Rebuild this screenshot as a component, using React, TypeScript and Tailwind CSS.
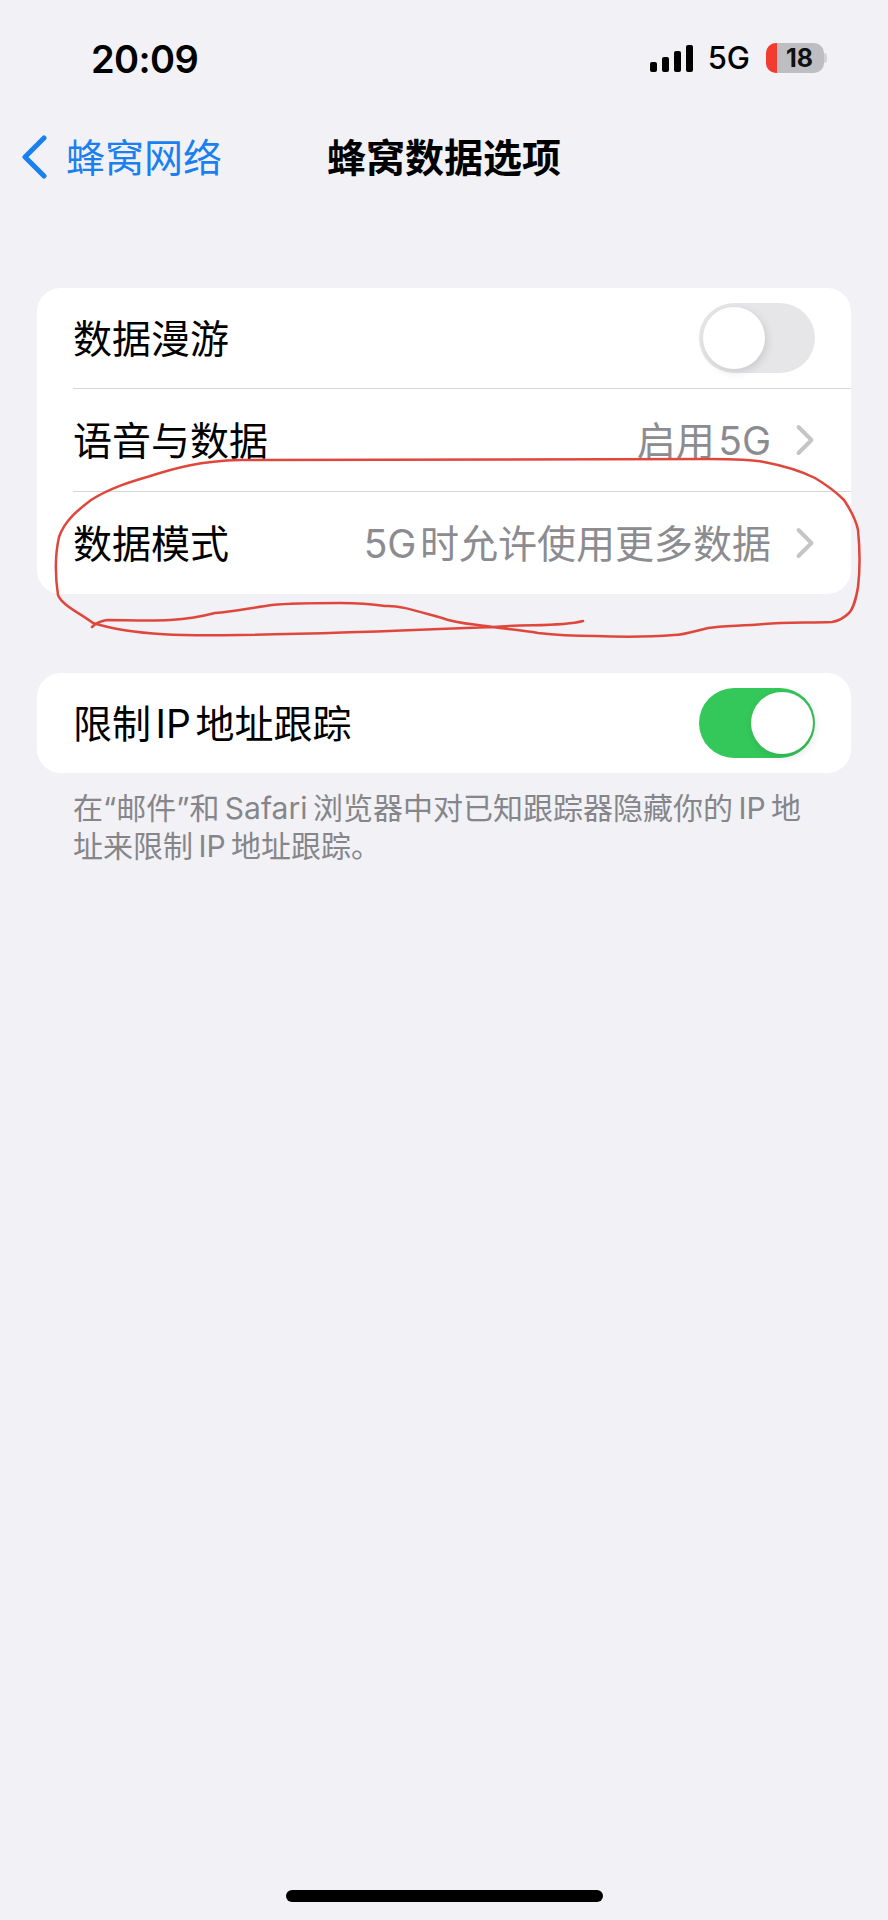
import { ChevronRight } from 'lucide-react'

const cjk = "font-['Inter','Noto_Sans_CJK_SC',sans-serif]"

function Toggle({ on }: { on?: boolean }) {
  return (
    <div
      className={
        on
          ? 'flex h-[70px] w-[116px] items-center justify-end rounded-full bg-[#34c759] pr-[2px]'
          : 'flex h-[70px] w-[116px] items-center justify-start rounded-full bg-[#e6e6e9] pl-[4px]'
      }
    >
      <div className="h-[62px] w-[62px] rounded-full bg-white shadow-[2px_3px_8px_rgba(0,0,0,0.12)]" />
    </div>
  )
}

function Row({ label, value, divider }: { label: string; value: string; divider?: boolean }) {
  return (
    <div className="pl-[36px]">
      <div className={divider ? 'flex h-[103px] items-center border-b border-[#d6d6d9] pr-[37px]' : 'flex h-[102px] items-center pr-[37px]'}>
        <span className="flex-1 pt-[3px] text-[39px] text-black">{label}</span>
        <span className="pt-[3px] text-[39px] text-[#8c8c90]">{value}</span>
        <ChevronRight className="-mr-[17px] ml-[8px] h-[52px] w-[52px] text-[#c5c5c8]" strokeWidth={1.8} />
      </div>
    </div>
  )
}

export default function App() {
  return (
    <div className={`relative flex h-[1920px] w-[888px] flex-col bg-[#f1f1f6] ${cjk}`}>
      {/* Status bar */}
      <div className="flex h-[117px] items-start justify-between pl-[91px] pr-[61px] pt-[36px]">
        <span className="text-[38px] font-semibold leading-[46px] tracking-[-0.6px] text-black">20:09</span>
        <div className="flex items-center pt-[7px]">
          <div className="flex items-end gap-[5px]">
            <div className="h-[10px] w-[7px] rounded-[2px] bg-black" />
            <div className="h-[15px] w-[7px] rounded-[2px] bg-black" />
            <div className="h-[21px] w-[7px] rounded-[2px] bg-black" />
            <div className="h-[27px] w-[7px] rounded-[2px] bg-black" />
          </div>
          <span className="ml-[15px] text-[31px] font-medium leading-[30px] text-black">5G</span>
          <div className="ml-[16px] flex items-center">
            <div className="flex h-[30px] w-[58px] overflow-hidden rounded-[10px] bg-[#bebec2]">
              <div className="h-full w-[11px] bg-[#f43b30]" />
              <span className="flex-1 pr-[2px] text-center text-[25px] font-bold leading-[30px] text-[#111]">18</span>
            </div>
            <div className="h-[10px] w-[3px] rounded-r-[3px] bg-[#d4d4d8]" />
          </div>
        </div>
      </div>

      {/* Nav */}
      <div className="grid h-[80px] grid-cols-[1fr_auto_1fr] items-center">
        <div className="flex items-center pl-[21px] text-[#1a7ff0]">
          <svg width="26" height="44" viewBox="0 0 26 44" fill="none" className="text-[#1a7ff0]">
            <path d="M23 3 L4 22 L23 41" stroke="currentColor" strokeWidth="5" strokeLinecap="round" strokeLinejoin="round" />
          </svg>
          <span className="ml-[19px] text-[39px] leading-none">蜂窝网络</span>
        </div>
        <span className="text-[39px] font-bold leading-none text-black">蜂窝数据选项</span>
        <div />
      </div>

      {/* Cards */}
      <div className="mx-[37px] mt-[91px] overflow-hidden rounded-[24px] bg-white">
        <div className="pl-[36px]">
          <div className="flex h-[101px] items-center justify-between border-b border-[#d6d6d9] pr-[36px]">
            <span className="pt-[3px] text-[39px] text-black">数据漫游</span>
            <Toggle />
          </div>
        </div>
        <Row label="语音与数据" value="启用&#x200a;5G" divider />
        <Row label="数据模式" value="5G&#x200a;时允许使用更多数据" />
      </div>

      <div className="mx-[37px] mt-[79px] flex h-[100px] items-center justify-between rounded-[24px] bg-white pl-[36px] pr-[36px]">
        <span className="pt-[2px] text-[39px] text-black">
          限制&#x200a;<span className="mx-[1px]">IP</span>&#x200a;地址跟踪
        </span>
        <Toggle on />
      </div>

      <p className="mx-[73px] mt-[16px] text-[30px] leading-[38px] text-[#86868a]">
        在“邮件”和&#x2009;Safari&#x2009;浏览器中对已知跟踪器隐藏你的&#x2009;IP&#x2009;地址来限制&#x2009;IP&#x2009;地址跟踪。
      </p>

      {/* Home indicator */}
      <div className="mt-auto mb-[18px] h-[12px] w-[317px] self-center rounded-full bg-black" />

      {/* Red pen annotation drawn over the list */}
      <svg className="absolute left-0 top-0" width="888" height="700" viewBox="0 0 888 700" fill="none">
        <path
          d="M583 621 C560 627 530 624 493 627 C420 630 330 634 240 635 C190 636 135 636 93 623 C78 612 62 605 58 595 C55 575 55 555 59 537 C65 520 78 510 91 500 C110 488 130 482 147 477 C175 468 200 461 240 460 L708 459 C730 459 750 459 764 462 C785 466 803 472 815 478 C830 487 838 494 844 500 C852 512 856 520 858 530 C860 550 860 570 858 587 C856 600 852 610 849 613 C843 619 838 621 832 622 C810 623 785 622 764 624 C740 626 722 626 708 628 C695 631 685 635 674 635 C650 637 620 637 595 636 C570 636 555 635 538 633 C520 630 505 629 493 627 C475 624 458 624 442 618 C420 612 400 605 385 606 C365 603 350 603 340 603 C315 603 293 603 272 605 C250 608 232 612 215 613 C200 617 185 619 170 620 C150 621 125 620 107 620 C100 621 96 623 92 627"
          stroke="#e0473c"
          strokeWidth="2.5"
          strokeLinecap="round"
        />
      </svg>
    </div>
  )
}
